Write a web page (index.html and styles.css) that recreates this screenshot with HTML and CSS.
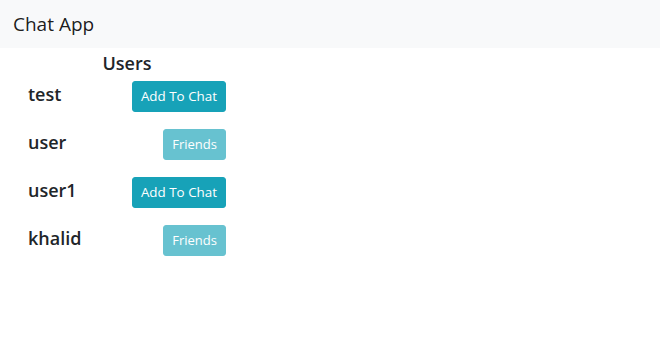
FILE: index.html
```html
<!DOCTYPE html>
<html lang="en">
<head>
<meta charset="UTF-8">
<title>Chat App</title>
<link rel="stylesheet" href="styles.css">
</head>
<body>
<nav class="navbar">
  <span class="brand">Chat App</span>
</nav>

<div class="users">
  <h5 class="users-title">Users</h5>
  <div class="user-row">
    <span class="user-name">test</span>
    <button class="btn">Add To Chat</button>
  </div>
  <div class="user-row">
    <span class="user-name">user</span>
    <button class="btn btn-friends" disabled>Friends</button>
  </div>
  <div class="user-row">
    <span class="user-name">user1</span>
    <button class="btn">Add To Chat</button>
  </div>
  <div class="user-row">
    <span class="user-name">khalid</span>
    <button class="btn btn-friends" disabled>Friends</button>
  </div>
</div>
</body>
</html>
```

FILE: styles.css
```css
body {
  margin: 0;
  font-family: 'Open Sans', 'Noto Sans', sans-serif;
  color: #212529;
  background: #fff;
}

.navbar {
  background-color: #f8f9fa;
  height: 48px;
  display: flex;
  align-items: center;
  padding: 0 13px;
}

.brand {
  font-size: 19px;
  color: rgba(0, 0, 0, 0.9);
}

.users {
  width: 198px;
  padding-left: 28px;
}

.users-title {
  margin: 3px 0 6px;
  font-size: 18px;
  font-weight: 600;
  text-align: center;
  line-height: 24px;
}

.user-row {
  display: flex;
  justify-content: space-between;
  align-items: center;
  height: 31px;
  margin-bottom: 17px;
}

.user-name {
  font-size: 18px;
  font-weight: 600;
  margin-top: -5px;
}

.btn {
  font-family: inherit;
  font-size: 13.4px;
  line-height: 21px;
  padding: 4px 8px;
  border: 1px solid #17a2b8;
  border-radius: 3px;
  background-color: #17a2b8;
  color: #fff;
  cursor: pointer;
}

.btn-friends {
  font-size: 13px;
  opacity: 0.65;
  cursor: default;
}
```
